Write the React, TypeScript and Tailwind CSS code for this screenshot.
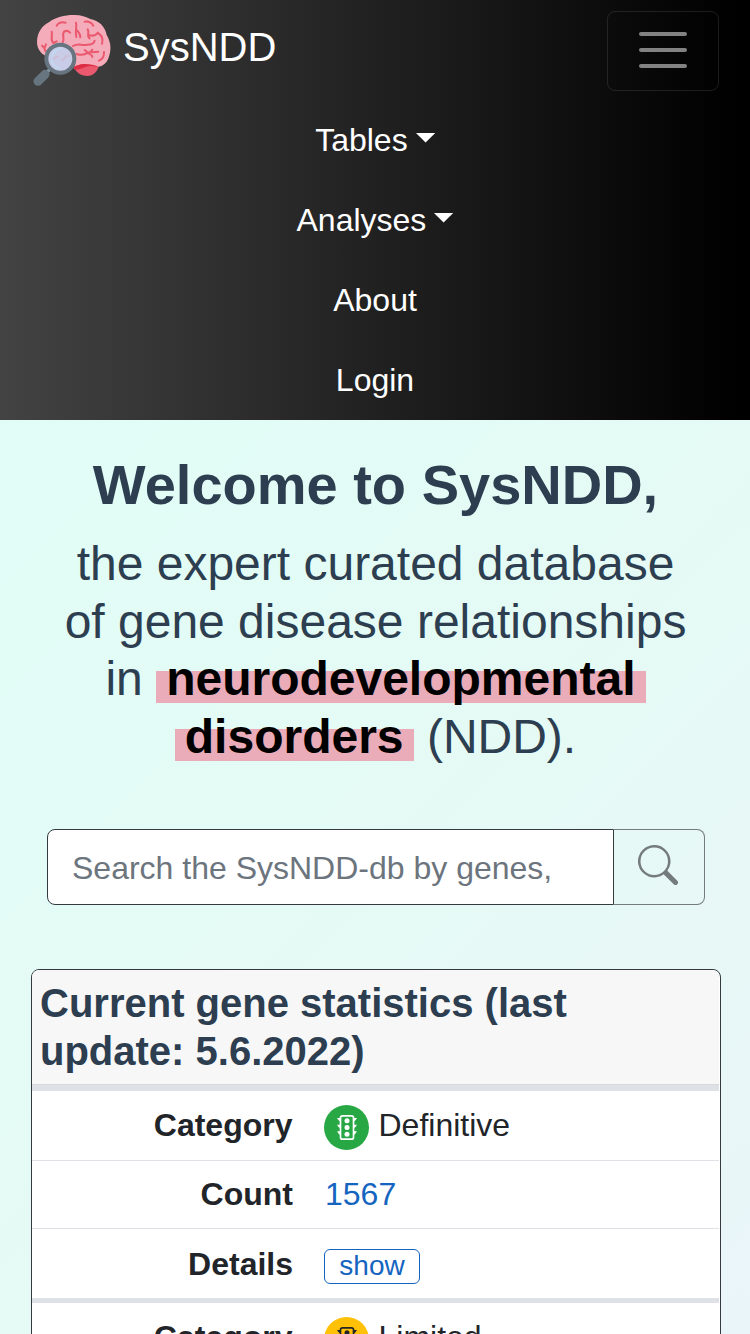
import { BsSearch } from "react-icons/bs";

function BrainLogo() {
  return (
    <svg viewBox="0 0 252 240" className="block h-[80px] w-[84px] shrink-0" aria-hidden="true">
      <path d="M130 166C136 188 152 198 172 198C190 198 202 186 207 166L180 158Z" fill="#EA596E" />
      <path d="M128 160L132 178C150 182 162 169 180 168C192 167 200 172 208 167L190 154Z" fill="#DD2E44" />
      <path d="M130 15C150 14 168 20 181 27C206 31 226 50 230 75C241 92 245 116 238 136C234 155 222 168 206 170C190 164 172 160 152 163C140 166 132 172 120 168L60 142C36 138 20 118 21 94C22 68 36 46 58 36C76 22 104 15 130 15Z" fill="#F4ABBA" />
      <g fill="none" stroke="#EA596E" strokeWidth="6" strokeLinecap="round" strokeLinejoin="round">
        <path d="M80 47Q88 34 107 38" />
        <path d="M138 38C142 52 134 62 139 81M138 59Q150 68 151 82" />
        <path d="M164 35Q181 32 190 47" />
        <path d="M65 65C68 78 60 88 70 99L80 94" />
        <path d="M98 97C106 87 94 76 102 65Q112 59 120 68" />
        <path d="M173 58C180 68 168 79 179 85M178 76Q195 80 204 68" />
        <path d="M205 70Q222 80 216 101" />
        <path d="M129 108C146 98 154 108 172 104Q191 104 194 92" />
        <path d="M36 107L43 114L48 103M46 123L43 114" />
        <path d="M139 132C151 136 164 135 174 128Q183 128 187 119M174 128L164 120M174 130Q187 134 187 141M187 127L205 125" />
        <path d="M222 126Q223 146 207 152" />
      </g>
      <path d="M50 188L65 172" stroke="#8899A6" strokeWidth="10" />
      <path d="M45 193L24 214" stroke="#66757F" strokeWidth="27" strokeLinecap="round" />
      <circle cx="91" cy="146" r="42" fill="#C8CCE7" stroke="#66757F" strokeWidth="12" />
      <path d="M65 142C66 127 79 116 95 116M64 148C67 163 76 173 90 176" fill="none" stroke="#BDDDF4" strokeWidth="4" />
      <path d="M72 150Q72 139 87 140M93 151Q103 150 108 139L120 138" fill="none" stroke="#CDBFD8" strokeWidth="6" />
    </svg>
  );
}

function StoplightIcon() {
  return (
    <svg viewBox="0 0 60 75" className="h-[25px] w-[20px]" aria-hidden="true">
      <rect x="10.500" y="2.500" width="39" height="70" rx="6" fill="none" stroke="currentColor" strokeWidth="5" />
      <g fill="currentColor">
        <circle cx="30" cy="17.500" r="7.500" />
        <circle cx="30" cy="37.500" r="7.500" />
        <circle cx="30" cy="57.500" r="7.500" />
        <path d="M0 9H10V20Q4 17 0 9ZM0 29H10V40Q4 37 0 29ZM0 49H10V60Q4 57 0 49Z" />
        <path d="M60 9H50V20Q56 17 60 9ZM60 29H50V40Q56 37 60 29ZM60 49H50V60Q56 57 60 49Z" />
      </g>
    </svg>
  );
}

function NavItem({ label, dropdown = false }: { label: string; dropdown?: boolean }) {
  return (
    <a className="flex h-20 items-center justify-center text-[32px] leading-[48px] text-white">
      {label}
      {dropdown && (
        <svg viewBox="0 0 19.200 9.600" className="mb-1 ml-[8px] h-[9.6px] w-[19.2px]" aria-hidden="true">
          <path d="M0 0H19.200L9.600 9.600Z" fill="#fff" />
        </svg>
      )}
    </a>
  );
}

function CategoryRow({ name, tone }: { name: string; tone: string }) {
  return (
    <div className="flex h-[70px] border-b border-[#dee2e6] pt-[10px]">
      <div className="w-[260.5px] text-right font-bold leading-[48px]">Category</div>
      <div className="ml-[31.5px] flex items-start">
        <span className={`mt-[4px] flex h-[45px] w-[45px] items-center justify-center rounded-full ${tone}`}>
          <StoplightIcon />
        </span>
        <span className="ml-[9.5px] leading-[48px]">{name}</span>
      </div>
    </div>
  );
}

export default function App() {
  return (
    <div className="h-[1334px] overflow-hidden bg-[linear-gradient(135deg,#e0fef6_0%,#e2fcf6_30%,#e5faf5_60%,#e8f7f7_85%,#eaf5f9_100%)] font-['Liberation_Sans',Arial,sans-serif]">
      <nav className="h-[420px] bg-[linear-gradient(90deg,#434343_0%,#000000_98%)]">
        <div className="flex h-[100px] items-start justify-between pl-[30px] pr-[31px]">
          <div className="flex items-start pt-[10px]">
            <BrainLogo />
            <span className="ml-[9px] mt-[7px] text-[40px] leading-[60px] text-white">SysNDD</span>
          </div>
          <button className="mt-[11px] flex h-[80px] w-[112px] flex-col items-center justify-center gap-3 rounded-lg border border-white/10 pb-[2px]" aria-label="Toggle navigation">
            <span className="h-1 w-12 rounded-full bg-[#828282]" />
            <span className="h-1 w-12 rounded-full bg-[#828282]" />
            <span className="h-1 w-12 rounded-full bg-[#828282]" />
          </button>
        </div>
        <NavItem label="Tables" dropdown />
        <NavItem label="Analyses" dropdown />
        <NavItem label="About" />
        <NavItem label="Login" />
      </nav>

      <main className="pl-[31px] pr-[29px] pt-[31px]">
        <header className="pr-px text-center text-[#2c3e50]">
          <h1 className="text-[56px] font-bold leading-[67px]">Welcome to SysNDD,</h1>
          <h2 className="mt-[17px] text-[48px] leading-[57.7px]">
            the expert curated database
            <br />
            of gene disease relationships
            <br />
            in{" "}
            <mark className="bg-transparent bg-[linear-gradient(transparent_35%,#eaacb9_35%,#eaacb9_97%,transparent_97%)] box-decoration-clone px-[10px] font-bold text-black">
              neurodevelopmental
              <br />
              disorders
            </mark>{" "}
            (NDD).
          </h2>
        </header>

        <div className="ml-4 mt-[63px] flex h-[76px] w-[658px]">
          <input
            className="h-full w-[567px] rounded-l-lg border border-[#343a40] bg-white pl-6 pr-6 pt-[3px] text-[32px] text-[#6c757d] outline-none placeholder:text-[#6c757d]"
            placeholder="Search the SysNDD-db by genes,"
          />
          <button className="flex h-full w-[91px] items-start justify-center rounded-r-lg border border-l-0 border-[#747b7b] pr-[3px] pt-[15px] text-[#747b7b]" aria-label="Search">
            <BsSearch className="h-10 w-10" />
          </button>
        </div>

        <section className="mt-[64px] h-[400px] rounded-t-lg border border-[#343a40] bg-white text-[32px] text-[#212529]">
          <h3 className="mr-px h-[115px] rounded-t-[7px] border-b border-[#d6d9da] bg-[#f7f7f7] pl-2 pt-[9px] text-[40px] font-bold leading-[48px] text-[#2c3e50]">
            Current gene statistics (last
            <br />
            update: 5.6.2022)
          </h3>
          <div className="mr-px border-t-[6px] border-[#dee2e6]">
            <CategoryRow name="Definitive" tone="bg-[#28a745] text-white" />
            <div className="flex h-[68px] border-b border-[#dee2e6] pt-[9px] leading-[48px]">
              <div className="w-[261px] text-right font-bold">Count</div>
              <a className="ml-[32px] text-[#1565c0]">1567</a>
            </div>
            <div className="flex h-[69px] pt-[11px] leading-[48px]">
              <div className="w-[261px] text-right font-bold">Details</div>
              <button className="ml-[31px] mt-[9px] h-[35px] w-[96px] rounded-md border border-[#1565c0] text-[28px] leading-[32px] text-[#1565c0]">
                show
              </button>
            </div>
          </div>
          <div className="mr-px border-t-[5px] border-[#dee2e6]">
            <CategoryRow name="Limited" tone="bg-[#ffc107] text-[#212529]" />
          </div>
        </section>
      </main>
    </div>
  );
}
